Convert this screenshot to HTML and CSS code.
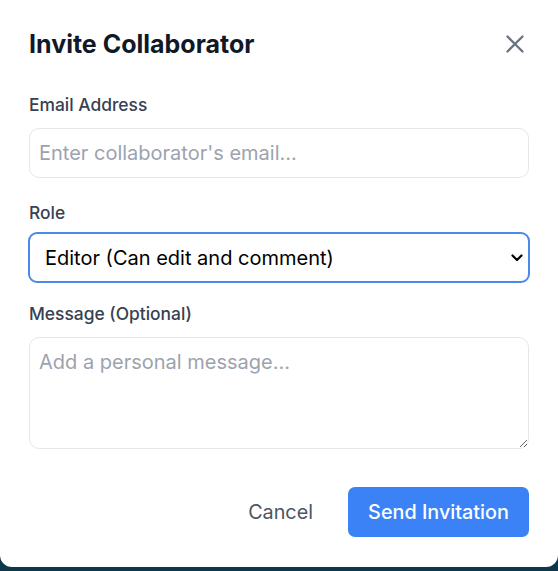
FILE: index.html
```html
<!DOCTYPE html>
<html lang="en">
<head>
<meta charset="utf-8">
<title>Invite Collaborator</title>
<link rel="stylesheet" href="styles.css">
</head>
<body>
<div class="modal">
  <div class="modal-header">
    <h2 class="modal-title">Invite Collaborator</h2>
    <button class="close-btn" aria-label="Close">
      <svg width="18" height="18" viewBox="0 0 18 18" fill="none" stroke="currentColor" stroke-width="2.3" stroke-linecap="round"><path d="M1.5 1.5 L16.5 16.5 M16.5 1.5 L1.5 16.5"/></svg>
    </button>
  </div>
  <div class="field">
    <label class="label">Email Address</label>
    <input class="input" type="email" placeholder="Enter collaborator's email...">
  </div>
  <div class="field field-select">
    <label class="label">Role</label>
    <div class="select-wrap">
      <select class="select">
        <option>Editor (Can edit and comment)</option>
        <option>Viewer (Can view only)</option>
      </select>
      <svg class="chevron" width="12" height="8" viewBox="0 0 12 8" fill="none" stroke="#000" stroke-width="2.2" stroke-linecap="round" stroke-linejoin="round"><path d="M1.5 1.5 L6 6 L10.5 1.5"/></svg>
    </div>
  </div>
  <div class="field">
    <label class="label">Message (Optional)</label>
    <textarea class="textarea" placeholder="Add a personal message..."></textarea>
  </div>
  <div class="actions">
    <button class="btn btn-cancel">Cancel</button>
    <button class="btn btn-primary">Send Invitation</button>
  </div>
</div>
</body>
</html>
```
FILE: styles.css
```css
* { box-sizing: border-box; }
html, body { margin: 0; padding: 0; }
body {
  background: #0c384b;
  font-family: Inter, "Noto Sans", sans-serif;
  width: 558px;
  height: 571px;
  overflow: hidden;
}
.modal {
  width: 558px;
  background: #ffffff;
  border-radius: 0 0 12px 12px;
  padding: 28px 29px 30px 29px;
}
.modal-header {
  display: flex;
  justify-content: space-between;
  align-items: center;
  height: 32px;
  margin-bottom: 35px;
}
.modal-title {
  margin: 0;
  font-size: 25px;
  line-height: 32px;
  font-weight: 700;
  color: #111827;
}
.close-btn {
  background: none;
  border: none;
  padding: 0;
  margin-right: 5px;
  width: 18px;
  height: 18px;
  color: #6b7280;
  display: flex;
}
.field { margin-bottom: 25px; display: flex; flex-direction: column; }
.label {
  font-size: 17.4px;
  line-height: 20px;
  font-weight: 500;
  color: #374151;
  margin-bottom: 13px;
}
.input, .textarea {
  width: 100%;
  border: 1px solid #e5e7eb;
  border-radius: 10px;
  font-family: Inter, "Noto Sans", sans-serif;
  font-size: 20px;
  color: #111827;
  outline: none;
}
.input { height: 50px; padding: 0 9px; }
.textarea { height: 112px; padding: 12px 9px; resize: vertical; display: block; }
.input::placeholder, .textarea::placeholder { color: #9ca3af; }
.field-select { margin-bottom: 21px; }
.field-select .label { margin-bottom: 9px; }
.select-wrap {
  position: relative;
  width: 502px;
  margin-left: -1px;
}
.select {
  -webkit-appearance: none;
  appearance: none;
  display: block;
  width: 100%;
  height: 51px;
  border: 2px solid #4a88ea;
  border-radius: 9px;
  background: #ffffff;
  font-family: Inter, "Noto Sans", sans-serif;
  font-size: 20px;
  color: #000000;
  padding: 0 30px 0 15px;
  outline: none;
}
.chevron {
  position: absolute;
  right: 7px;
  top: 22px;
  pointer-events: none;
}
.actions {
  display: flex;
  justify-content: flex-end;
  align-items: center;
  gap: 15px;
  margin-top: 38px;
}
.btn {
  font-family: Inter, "Noto Sans", sans-serif;
  font-size: 19.8px;
  font-weight: 500;
  height: 50px;
  border-radius: 7px;
  border: none;
  padding: 0 20px;
  cursor: pointer;
}
.btn-cancel { background: transparent; color: #4b5563; font-weight: 400; }
.btn-primary { background: #3b82f6; color: #ffffff; width: 181px; }
```
